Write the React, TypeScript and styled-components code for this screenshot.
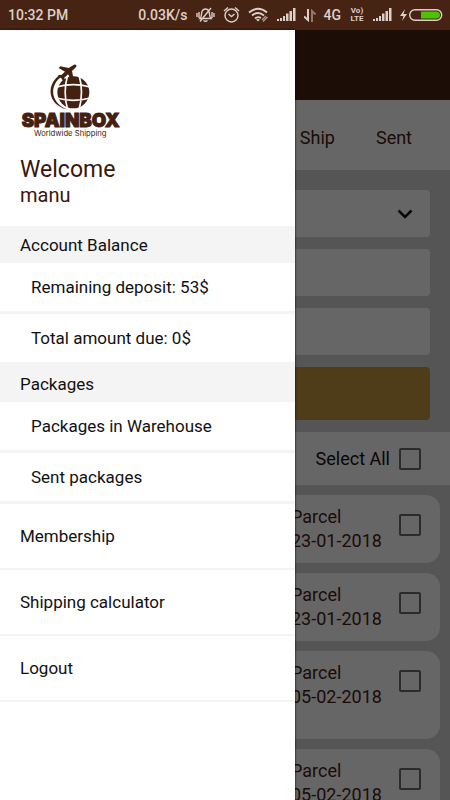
import React from "react";
import styled, { createGlobalStyle } from "styled-components";

const GlobalStyle = createGlobalStyle`
  *, *::before, *::after { box-sizing: border-box; }
  body { margin: 0; font-family: Roboto, "Liberation Sans", sans-serif; font-size: 17px; color: #111; }
  h1, h2, p, ul { margin: 0; padding: 0; font-weight: 400; }
  button, input, select { font: inherit; color: inherit; }
`;

const Screen = styled.div`
  display: flex;
  flex-direction: column;
  height: 100vh;
  overflow: hidden;
  background: #d5d5d5;
`;

const StatusBar = styled.header`
  display: flex;
  flex: none;
  align-items: center;
  justify-content: space-between;
  height: 30px;
  padding: 0 7px 0 8px;
  background: #462312;
  color: #dcd0ca;
  font-size: 14px;
  font-weight: 500;
`;

const StatusGroup = styled.div`
  display: flex;
  align-items: center;
  gap: 8px;
  svg { display: block; flex: none; }
`;

const VoLte = styled.span`
  display: grid;
  width: 16px;
  font-size: 8px;
  font-weight: 700;
  line-height: 8px;
  text-align: center;
`;

const Stage = styled.div`
  position: relative;
  flex: 1;
  min-height: 0;
`;

const Page = styled.main`
  display: flex;
  flex-direction: column;
  height: 100%;
  overflow: hidden;
`;

const AppBar = styled.div`
  flex: none;
  height: 70px;
  background: #462312;
`;

const Tabs = styled.nav`
  display: flex;
  flex: none;
  align-items: center;
  justify-content: flex-end;
  gap: 41px;
  height: 70px;
  padding: 5px 38px 0 20px;
  background: #fff;
`;

const Tab = styled.button`
  padding: 0;
  border: 0;
  background: none;
  color: #4a1c10;
  font-size: 18px;
`;

const Form = styled.form`
  display: flex;
  flex: none;
  flex-direction: column;
  gap: 12px;
  padding: 20px 20px 12px;
`;

const SelectField = styled.div`
  display: grid;
  align-items: center;
  > * { grid-area: 1 / 1; }
  svg { justify-self: end; margin-right: 17px; pointer-events: none; }
`;

const Select = styled.select`
  width: 100%;
  height: 47px;
  border: 0;
  border-radius: 4px;
  background: #fff;
  appearance: none;
`;

const TextInput = styled.input`
  width: 100%;
  height: 47px;
  border: 0;
  border-radius: 4px;
  background: #fff;
`;

const SubmitButton = styled.button`
  height: 53px;
  border: 0;
  border-radius: 4px;
  background: #c3993c;
`;

const SelectAll = styled.label`
  display: flex;
  flex: none;
  align-items: center;
  justify-content: flex-end;
  gap: 9px;
  height: 53px;
  padding-right: 29px;
  background: #fff;
  font-size: 18px;
`;

const Checkbox = styled.input.attrs({ type: "checkbox" })`
  flex: none;
  width: 22px;
  height: 22px;
  margin: 0;
  border: 2px solid #6c6c6c;
  border-radius: 2px;
  appearance: none;
`;

const ParcelList = styled.ul`
  display: flex;
  flex-direction: column;
  gap: 10px;
  padding: 10px;
  list-style: none;
`;

const ParcelCard = styled.li<{ $tall?: boolean }>`
  display: flex;
  flex: none;
  align-items: flex-start;
  justify-content: flex-end;
  min-height: ${(p) => (p.$tall ? 88 : 67)}px;
  padding: 10px 19px;
  border-radius: 14px;
  background: #fff;
  color: #4a1c10;
  font-size: 18px;
  line-height: 24px;
`;

const ParcelLabel = styled.label`
  display: flex;
  align-items: flex-start;
  input { margin-top: 9px; }
`;

const ParcelText = styled.span`
  display: grid;
  width: 108px;
`;

const Scrim = styled.div`
  position: absolute;
  inset: 0;
  background: rgba(0, 0, 0, 0.6);
`;

const Drawer = styled.aside`
  position: absolute;
  inset: 0 auto 0 0;
  width: 295px;
  max-width: 85%;
  overflow: hidden;
  background: #fff;
  box-shadow: 0 0 2px #000;
`;

const Profile = styled.div`
  height: 196px;
  padding: 33px 20px 0;
  color: #3c160a;
  svg { display: block; }
`;

const Welcome = styled.h1`
  margin-top: 18px;
  font-size: 23px;
  line-height: 27px;
`;

const UserName = styled.p`
  font-size: 20px;
  line-height: 24px;
`;

const SectionTitle = styled.h2`
  padding: 2px 20px 0;
  background: #f4f4f4;
  font-size: 17px;
  line-height: 35px;
`;

const MenuItem = styled.a<{ $nested?: boolean }>`
  display: block;
  padding: 0 ${(p) => (p.$nested ? 31 : 20)}px;
  border-bottom: ${(p) => (p.$nested ? 3 : 2)}px solid #f4f4f4;
  color: inherit;
  line-height: ${(p) => (p.$nested ? 48 : 64)}px;
  text-decoration: none;
`;

const parcels = [
  { date: "23-01-2018" },
  { date: "23-01-2018" },
  { date: "05-02-2018", tall: true },
  { date: "05-02-2018", tall: true },
];

function Logo() {
  return (
    <svg width="100" height="75" viewBox="30 24 300 225" role="img" aria-label="Spainbox Worldwide Shipping" fill="#43200f">
      <circle cx="190" cy="112" r="48" />
      <g fill="none" stroke="#fff" strokeWidth="5">
        <path d="M173 60Q158 112 173 164M207 60Q222 112 207 164M140 96Q190 82 240 96M140 129Q190 143 240 129" />
      </g>
      <path d="M152 59C111 81 107 146 170 163C119 141 118 88 157 63Z" />
      <path d="M192 29Q201 27 199 35L186 48L191 73L185 77L174 58L163 68L164 76L159 78L153 68L143 65L146 60L154 60L165 50L146 39L151 34L176 39Z" />
      <text x="35" y="217" fontFamily="Inter, sans-serif" fontWeight="900" fontSize="56" stroke="#43200f" strokeWidth="3">SPAINBOX</text>
      <text x="72" y="242" fontFamily="Inter, sans-serif" fontSize="23">Worldwide Shipping</text>
    </svg>
  );
}

function MuteIcon() {
  return (
    <svg width="19" height="18" viewBox="0 0 19 18" fill="none" stroke="currentColor" strokeWidth="1.4">
      <path d="M4 12.5C6 10.5 5 8 6 5.5Q7 3 9.500 3T13 5.500C14 8 13 10.500 15 12.500ZM7.500 14.500Q9.500 16 11.500 14.500M15 2L4 15.500M1 7V11M3 6V12M16 6V12M18 7V11" />
    </svg>
  );
}

function AlarmIcon() {
  return (
    <svg width="17" height="18" viewBox="0 0 17 18" fill="none" stroke="currentColor" strokeWidth="1.4">
      <circle cx="8.500" cy="9.500" r="6.500" />
      <path d="M1 5L5 1.500M16 5L12 1.500M5.500 8L8.500 10.500L11.500 8" />
    </svg>
  );
}

function WifiIcon() {
  return (
    <svg width="21" height="16" viewBox="0 0 21 16" fill="none" stroke="currentColor" strokeWidth="1.900">
      <path d="M1 5.500Q10 -2 19 5.500M4 8.500Q10 3.500 16 8.500M7 11.500Q10 9 13 11" />
      <path d="M8 12.500L10 14.500L12 12.500Q10 11.500 8 12.500Z" fill="currentColor" stroke="none" />
      <path d="M14 13L18 9M15 14.500L19.500 10" strokeWidth="1.200" opacity=".7" />
    </svg>
  );
}

function SignalIcon() {
  return (
    <svg width="19" height="14" viewBox="0 0 19 14" fill="currentColor">
      <path d="M0 11H2V13H0ZM3 10H5V13H3ZM6 8H8V13H6ZM9 5.500H11.500V13H9ZM12.500 3H15V13H12.500ZM16 0H18.500V13H16Z" />
    </svg>
  );
}

function DataIcon() {
  return (
    <svg width="12" height="13" viewBox="0 0 12 13" fill="none" stroke="currentColor" strokeWidth="2">
      <path d="M4 0V11L0 7.500" />
      <path d="M8 13V2L11.500 5.500" opacity=".5" />
    </svg>
  );
}

function BatteryIcon() {
  return (
    <svg width="43" height="14" viewBox="0 0 43 14">
      <path d="M5 1L0 8H3.500L2 13L7 6H3.500Z" fill="currentColor" />
      <rect x="9.700" y="1.700" width="32" height="10.600" rx="5.300" fill="none" stroke="currentColor" strokeWidth="1.400" />
      <path d="M21 3.500H36Q40 3.500 40 7T36 10.500H21Z" fill="#4cc500" />
    </svg>
  );
}

export default function App() {
  return (
    <Screen>
      <GlobalStyle />
      <StatusBar>
        <span>10:32 PM</span>
        <StatusGroup>
          <span>0.03K/s</span>
          <MuteIcon />
          <AlarmIcon />
          <WifiIcon />
          <SignalIcon />
          <DataIcon />
          <span>4G</span>
          <VoLte><span>Vo)</span><span>LTE</span></VoLte>
          <SignalIcon />
          <BatteryIcon />
        </StatusGroup>
      </StatusBar>
      <Stage>
        <Page>
          <AppBar />
          <Tabs>
            <Tab type="button">Ship</Tab>
            <Tab type="button">Sent</Tab>
          </Tabs>
          <Form>
            <SelectField>
              <Select aria-label="Category" />
              <svg width="16" height="10" viewBox="0 0 16 10" fill="none" stroke="#111" strokeWidth="2.500">
                <path d="M1.500 1.500L8 8L14.500 1.500" />
              </svg>
            </SelectField>
            <TextInput aria-label="Description" />
            <TextInput aria-label="Value" />
            <SubmitButton type="button" aria-label="Submit" />
          </Form>
          <SelectAll>
            Select All
            <Checkbox />
          </SelectAll>
          <ParcelList>
            {parcels.map((parcel, i) => (
              <ParcelCard key={i} $tall={parcel.tall}>
                <ParcelLabel>
                  <ParcelText>
                    <span>Parcel</span>
                    <span>{parcel.date}</span>
                  </ParcelText>
                  <Checkbox />
                </ParcelLabel>
              </ParcelCard>
            ))}
          </ParcelList>
        </Page>
        <Scrim />
        <Drawer>
          <Profile>
            <Logo />
            <Welcome>Welcome</Welcome>
            <UserName>manu</UserName>
          </Profile>
          <nav>
            <SectionTitle>Account Balance</SectionTitle>
            <MenuItem href="#deposit" $nested>Remaining deposit: 53$</MenuItem>
            <MenuItem href="#due" $nested>Total amount due: 0$</MenuItem>
            <SectionTitle>Packages</SectionTitle>
            <MenuItem href="#warehouse" $nested>Packages in Warehouse</MenuItem>
            <MenuItem href="#sent" $nested>Sent packages</MenuItem>
            <MenuItem href="#membership">Membership</MenuItem>
            <MenuItem href="#calculator">Shipping calculator</MenuItem>
            <MenuItem href="#logout">Logout</MenuItem>
          </nav>
        </Drawer>
      </Stage>
    </Screen>
  );
}
